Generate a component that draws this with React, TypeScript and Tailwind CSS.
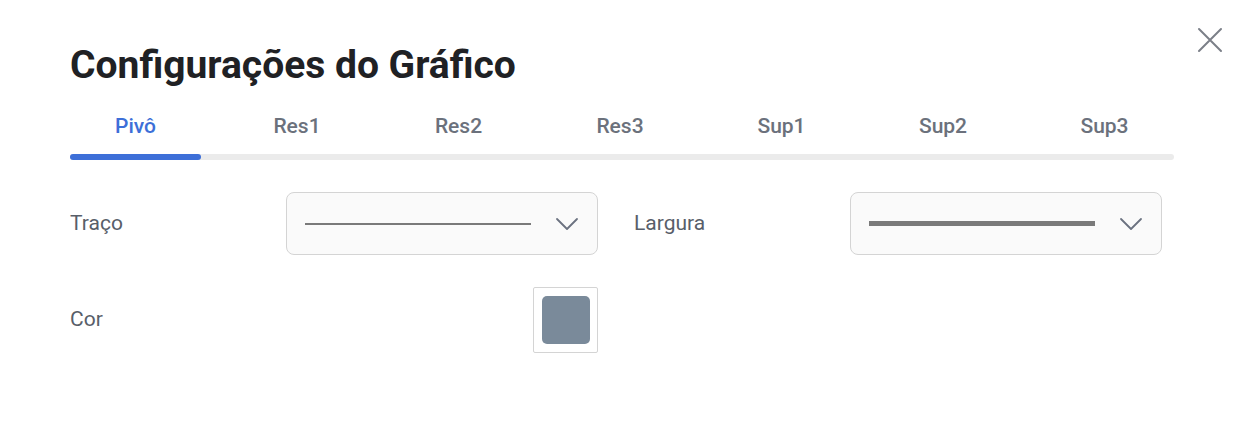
import React from "react";

const tabs = ["Pivô", "Res1", "Res2", "Res3", "Sup1", "Sup2", "Sup3"];

function Chevron() {
  return (
    <svg width="24" height="24" viewBox="0 0 24 24" fill="none" stroke="#6b7280" strokeWidth="1.8" strokeLinecap="round" strokeLinejoin="round">
      <path d="M2 7l10 10 10-10" />
    </svg>
  );
}

function Select({ thick }: { thick: number }) {
  return (
    <div className="h-[63px] w-[312px] rounded-[8px] border border-[#d4d4d4] bg-[#fafafa] flex items-center pl-[18px] pr-[18px]">
      <div className="w-[226px] bg-[#7a7a7a]" style={{ height: thick }} />
      <div className="ml-auto flex items-center">
        <Chevron />
      </div>
    </div>
  );
}

export default function App() {
  return (
    <div className="relative w-[1244px] h-[434px] bg-white" style={{ fontFamily: "Roboto, 'Noto Sans', sans-serif" }}>
      <button className="absolute left-[1196px] top-[26px] w-[28px] h-[28px] flex items-center justify-center">
        <svg width="26" height="26" viewBox="0 0 26 26" fill="none" stroke="#7b7f88" strokeWidth="2" strokeLinecap="round">
          <path d="M2 2l22 22M24 2L2 24" />
        </svg>
      </button>
      <div className="pl-[70px] pt-[42px]">
        <h1 className="text-[39px] leading-[46px] font-bold text-[#202124]">Configurações do Gráfico</h1>
        <div className="mt-[24px] w-[1104px]">
          <div className="flex gap-[30.5px]">
            {tabs.map((t, i) => (
              <div
                key={t}
                className={
                  "w-[131px] text-center text-[21px] leading-[28px] font-medium " +
                  (i === 0 ? "text-[#3d6fd8]" : "text-[#6b717c]")
                }
              >
                {t}
              </div>
            ))}
          </div>
          <div className="mt-[14px] h-[6px] rounded-full bg-[#ebebeb]">
            <div className="h-[6px] w-[131px] rounded-full bg-[#3d6fd8]" />
          </div>
        </div>
        <div className="mt-[32px] grid grid-cols-[216px_312px_36px_216px_312px] items-center">
          <div className="text-[21px] font-normal text-[#585e69]">Traço</div>
          <Select thick={2} />
          <div />
          <div className="text-[21px] font-normal text-[#585e69]">Largura</div>
          <Select thick={5} />
        </div>
        <div className="mt-[32px] grid grid-cols-[216px_312px] items-center">
          <div className="text-[21px] font-normal text-[#585e69]">Cor</div>
          <div className="flex justify-end">
            <div className="w-[65px] h-[66px] border border-[#d4d4d4] rounded-[2px] bg-white flex items-center justify-center">
              <div className="w-[48px] h-[48px] rounded-[5px] bg-[#7a8a9a]" />
            </div>
          </div>
        </div>
      </div>
    </div>
  );
}
